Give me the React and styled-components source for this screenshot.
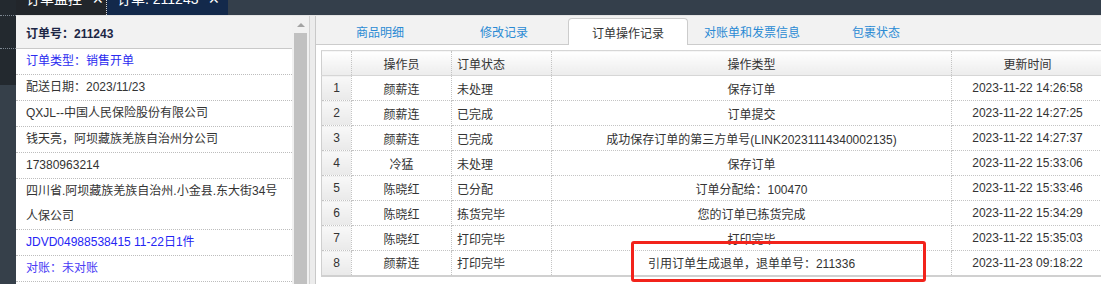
import React from 'react';
import styled, { createGlobalStyle } from 'styled-components';

const GlobalStyle = createGlobalStyle`
  html, body {
    margin: 0;
    padding: 0;
    background: #ffffff;
  }
  body {
    font-family: "Liberation Sans", "Noto Sans CJK SC", Arial, sans-serif;
    font-size: 12px;
    color: #333;
  }
  * { box-sizing: border-box; }
`;

const Page = styled.div`
  position: relative;
  width: 1101px;
  height: 284px;
  overflow: hidden;
  display: flex;
`;

const Sidebar = styled.div`
  width: 16px;
  flex-shrink: 0;
  display: flex;
  flex-direction: column;
  background: #36404a;
`;

const SideBlock = styled.div`
  height: ${p => p.h}px;
  background: #23292f;
  border-bottom: ${p => (p.line ? '1px dotted #7d8792' : 'none')};
`;

const Main = styled.div`
  flex: 1;
  display: flex;
  flex-direction: column;
  min-width: 0;
`;

const TopBar = styled.div`
  height: 15px;
  flex-shrink: 0;
  background: #343f4b;
  display: flex;
  overflow: hidden;
`;

const TopTab = styled.div`
  display: flex;
  align-items: flex-start;
  gap: 10px;
  padding: 0 10px;
  width: ${p => p.w}px;
  background: ${p => (p.active ? '#13294b' : '#22262b')};
  border-right: ${p => (p.active ? 'none' : '1px dotted #cfd4da')};
  color: #ffffff;
  font-size: 14px;
  line-height: 14px;
  white-space: nowrap;
`;

const TopTabLabel = styled.span`
  margin-top: -8px;
`;

const Body = styled.div`
  flex: 1;
  display: flex;
  border-top: 1px solid #e4e4e4;
  min-height: 0;
`;

const LeftPanel = styled.div`
  width: 294px;
  flex-shrink: 0;
  display: flex;
  border-right: 1px solid #d2d2d2;
`;

const InfoList = styled.div`
  flex: 1;
  background: #fff;
`;

const InfoHeader = styled.div`
  height: 33px;
  padding-left: 10px;
  display: flex;
  align-items: center;
  background: #f2f2f2;
  border-bottom: 1px solid #c9c9c9;
  font-weight: bold;
  color: #1c2645;
`;

const InfoRow = styled.div`
  padding: 0 14px 0 10px;
  line-height: 25px;
  border-bottom: 1px dotted #bdbdbd;
  color: ${p => p.color || '#333'};
`;

const ScrollTrack = styled.div`
  width: 17px;
  background: #f1f1f1;
  display: flex;
  flex-direction: column;
  align-items: center;
`;

const ScrollArrow = styled.div`
  height: 17px;
  display: flex;
  align-items: center;
  justify-content: center;
  &::before {
    content: '';
    border-left: 4px solid transparent;
    border-right: 4px solid transparent;
    border-bottom: 4px solid #a3a3a3;
  }
`;

const ScrollThumb = styled.div`
  width: 13px;
  flex: 1;
  background: #c1c1c1;
`;

const Gutter = styled.div`
  width: 5px;
  flex-shrink: 0;
  background: #ececec;
`;

const RightPanel = styled.div`
  flex: 1;
  min-width: 0;
  border-left: 1px solid #c9c9c9;
  background: #fff;
  display: flex;
  flex-direction: column;
`;

const TabBar = styled.div`
  height: 29px;
  flex-shrink: 0;
  display: flex;
  align-items: flex-end;
  gap: 4px;
  padding-left: 4px;
  background: #f2f2f2;
  border-bottom: 1px solid #cccccc;
`;

const Tab = styled.div`
  width: 120px;
  height: ${p => (p.active ? '27px' : '26px')};
  margin-bottom: ${p => (p.active ? '-1px' : '0')};
  display: flex;
  align-items: center;
  justify-content: center;
  color: ${p => (p.active ? '#333' : '#2a8ad4')};
  background: ${p => (p.active ? '#fff' : 'transparent')};
  border: ${p => (p.active ? '1px solid #cccccc' : '1px solid transparent')};
  border-bottom: none;
  border-radius: 4px 4px 0 0;
  font-size: 12px;
`;

const TableWrap = styled.div`
  padding: 5px 0 0 5px;
`;

const Table = styled.table`
  width: 782px;
  border-collapse: collapse;
  table-layout: fixed;
  border-top: 1px solid #d6d6d6;
  border-left: 1px solid #cfcfcf;
  border-bottom: 2px solid #d0d0d0;
`;

const Th = styled.th`
  height: 25px;
  padding: 0 5px;
  font-weight: normal;
  color: #333;
  text-align: ${p => p.align || 'center'};
  background: linear-gradient(#ffffff, #ececec);
  border-right: 1px dotted #c4c4c4;
  border-bottom: 1px solid #d6d6d6;
`;

const Td = styled.td`
  height: 25px;
  padding: 0 5px;
  white-space: nowrap;
  overflow: hidden;
  color: #333;
  text-align: ${p => p.align || 'center'};
  border-right: 1px dotted #c4c4c4;
  border-bottom: 1px dotted #c4c4c4;
`;

const NumCell = styled(Td)`
  background: linear-gradient(#f8f8f8, #e9e9e9);
`;

const Highlight = styled.div`
  position: absolute;
  left: 631px;
  top: 241px;
  width: 295px;
  height: 41px;
  border: 3px solid #f2231b;
  border-radius: 3px;
  pointer-events: none;
`;

const info = [
  { text: '订单类型：销售开单', color: '#2b2bf0' },
  { text: '配送日期：2023/11/23' },
  { text: 'QXJL--中国人民保险股份有限公司' },
  { text: '钱天亮，阿坝藏族羌族自治州分公司' },
  { text: '17380963214' },
  { text: '四川省.阿坝藏族羌族自治州.小金县.东大街34号人保公司' },
  { text: 'JDVD04988538415 11-22日1件', color: '#2525f5' },
  { text: '对账：未对账', color: '#4a3cf5' },
];

const tabs = ['商品明细', '修改记录', '订单操作记录', '对账单和发票信息', '包裹状态'];

const rows = [
  ['颜薪连', '未处理', '保存订单', '2023-11-22 14:26:58'],
  ['颜薪连', '已完成', '订单提交', '2023-11-22 14:27:25'],
  ['颜薪连', '已完成', '成功保存订单的第三方单号(LINK20231114340002135)', '2023-11-22 14:27:37'],
  ['冷猛', '未处理', '保存订单', '2023-11-22 15:33:06'],
  ['陈晓红', '已分配', '订单分配给：100470', '2023-11-22 15:33:46'],
  ['陈晓红', '拣货完毕', '您的订单已拣货完成', '2023-11-22 15:34:29'],
  ['陈晓红', '打印完毕', '打印完毕', '2023-11-22 15:35:03'],
  ['颜薪连', '打印完毕', '引用订单生成退单，退单单号：211336', '2023-11-23 09:18:22'],
];

export default function App() {
  return (
    <>
      <GlobalStyle />
      <Page>
        <Sidebar>
          <SideBlock h={16} line />
          <SideBlock h={33} line />
          <SideBlock h={36} />
        </Sidebar>
        <Main>
          <TopBar>
            <TopTab w={91}>
              <TopTabLabel>订单监控</TopTabLabel>
              <TopTabLabel>✕</TopTabLabel>
            </TopTab>
            <TopTab w={121} active>
              <TopTabLabel>订单: 211243</TopTabLabel>
              <TopTabLabel>✕</TopTabLabel>
            </TopTab>
          </TopBar>
          <Body>
            <LeftPanel>
              <InfoList>
                <InfoHeader>订单号：211243</InfoHeader>
                {info.map(item => (
                  <InfoRow key={item.text} color={item.color}>{item.text}</InfoRow>
                ))}
              </InfoList>
              <ScrollTrack>
                <ScrollArrow />
                <ScrollThumb />
              </ScrollTrack>
            </LeftPanel>
            <Gutter />
            <RightPanel>
              <TabBar>
                {tabs.map(t => (
                  <Tab key={t} active={t === '订单操作记录'}>{t}</Tab>
                ))}
              </TabBar>
              <TableWrap>
                <Table>
                  <colgroup>
                    <col style={{ width: 30 }} />
                    <col style={{ width: 100 }} />
                    <col style={{ width: 100 }} />
                    <col style={{ width: 400 }} />
                    <col style={{ width: 152 }} />
                  </colgroup>
                  <thead>
                    <tr>
                      <Th />
                      <Th>操作员</Th>
                      <Th align="left">订单状态</Th>
                      <Th>操作类型</Th>
                      <Th>更新时间</Th>
                    </tr>
                  </thead>
                  <tbody>
                    {rows.map((r, i) => (
                      <tr key={i}>
                        <NumCell>{i + 1}</NumCell>
                        <Td>{r[0]}</Td>
                        <Td align="left">{r[1]}</Td>
                        <Td>{r[2]}</Td>
                        <Td>{r[3]}</Td>
                      </tr>
                    ))}
                  </tbody>
                </Table>
              </TableWrap>
            </RightPanel>
          </Body>
        </Main>
        <Highlight />
      </Page>
    </>
  );
}
